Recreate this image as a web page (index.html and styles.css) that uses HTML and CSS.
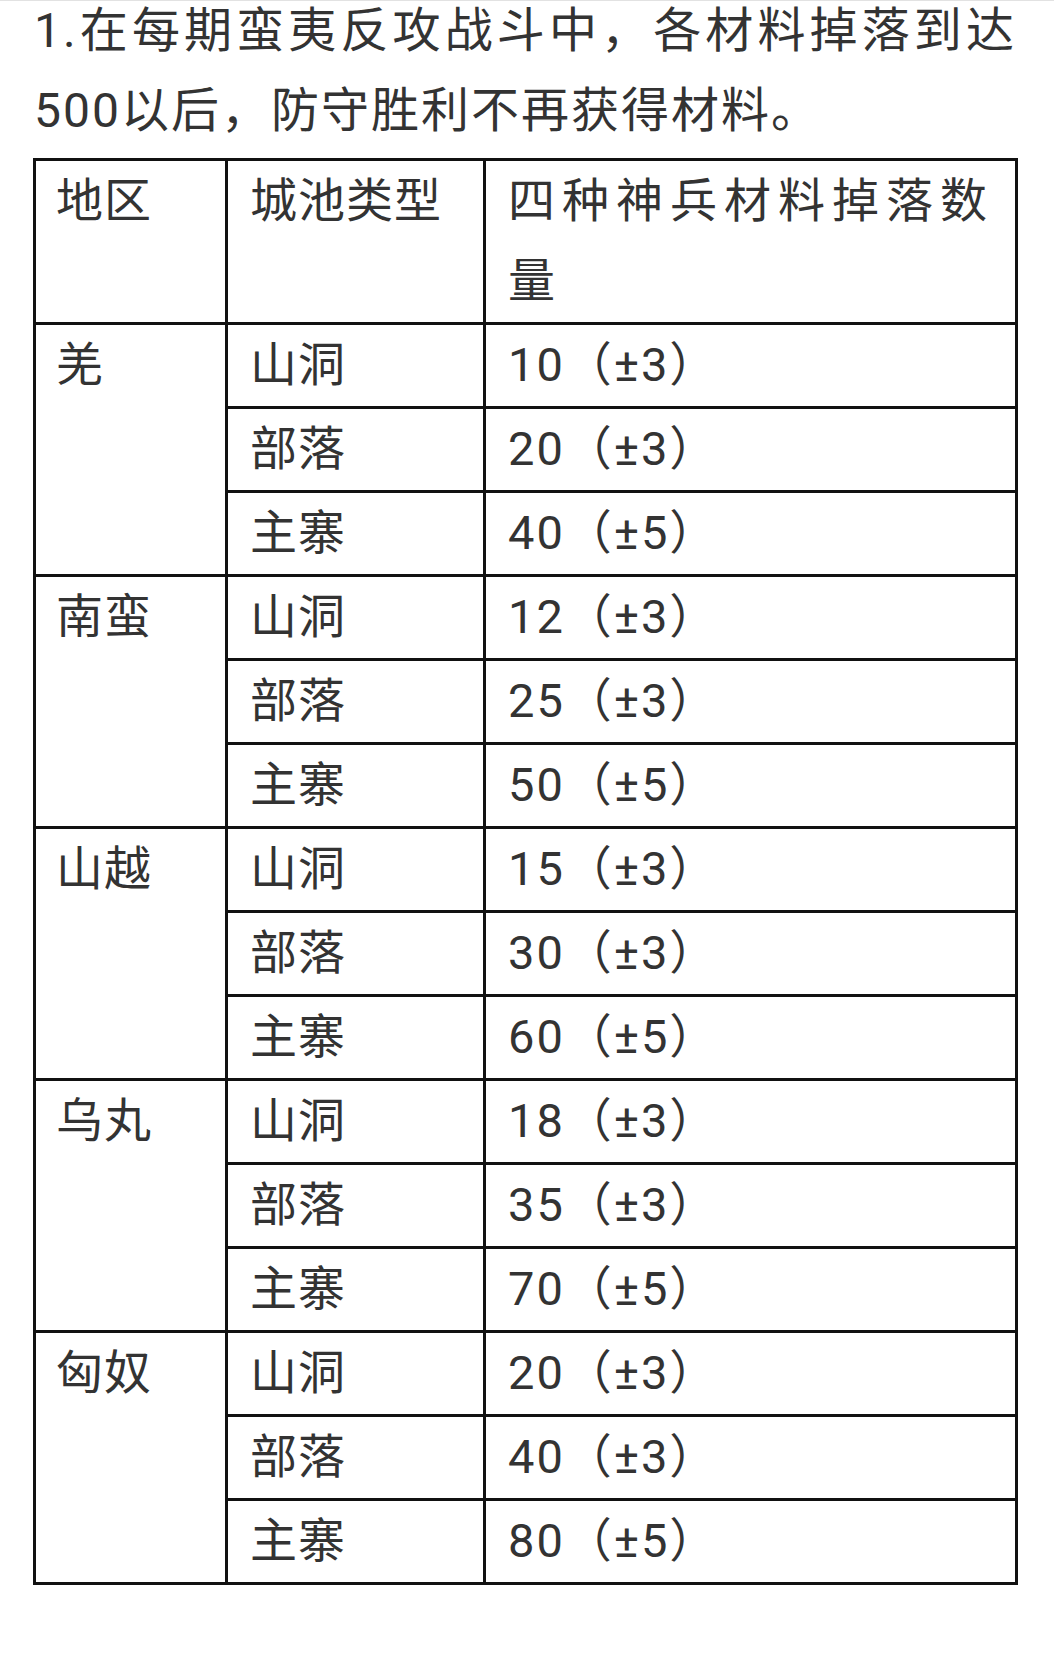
FILE: index.html
```html
<!DOCTYPE html>
<html lang="zh-CN">
<head>
<meta charset="utf-8">
<link rel="stylesheet" href="styles.css">
</head>
<body>
<div class="page">
  <p class="intro">1.在每期蛮夷反攻战斗中，各材料掉落到达500以后，防守胜利不再获得材料。</p>
  <table class="drops">
    <colgroup>
      <col class="c1">
      <col class="c2">
      <col class="c3">
    </colgroup>
    <tr><td class="region">地区</td><td>城池类型</td><td class="wide">四种神兵材料掉落数量</td></tr>
    <tr><td class="region" rowspan="3">羌</td><td>山洞</td><td class="wide">10（±3）</td></tr>
    <tr><td>部落</td><td class="wide">20（±3）</td></tr>
    <tr><td>主寨</td><td class="wide">40（±5）</td></tr>
    <tr><td class="region" rowspan="3">南蛮</td><td>山洞</td><td class="wide">12（±3）</td></tr>
    <tr><td>部落</td><td class="wide">25（±3）</td></tr>
    <tr><td>主寨</td><td class="wide">50（±5）</td></tr>
    <tr><td class="region" rowspan="3">山越</td><td>山洞</td><td class="wide">15（±3）</td></tr>
    <tr><td>部落</td><td class="wide">30（±3）</td></tr>
    <tr><td>主寨</td><td class="wide">60（±5）</td></tr>
    <tr><td class="region" rowspan="3">乌丸</td><td>山洞</td><td class="wide">18（±3）</td></tr>
    <tr><td>部落</td><td class="wide">35（±3）</td></tr>
    <tr><td>主寨</td><td class="wide">70（±5）</td></tr>
    <tr><td class="region" rowspan="3">匈奴</td><td>山洞</td><td class="wide">20（±3）</td></tr>
    <tr><td>部落</td><td class="wide">40（±3）</td></tr>
    <tr><td>主寨</td><td class="wide">80（±5）</td></tr>
  </table>
</div>
</body>
</html>
```
FILE: styles.css
```css
html, body {
  margin: 0;
  padding: 0;
  background: #ffffff;
}
body {
  border-top: 1px solid #e2e2e2;
  font-family: Roboto, "Noto Sans CJK SC", sans-serif;
  color: #333333;
}
.page {
  padding: 0 38px 0 34px;
}
.intro {
  margin: -10px 0 7px;
  font-size: 48px;
  line-height: 80px;
  letter-spacing: 2px;
  text-align: justify;
}
.drops {
  width: 982px;
  table-layout: fixed;
  border-collapse: collapse;
  border: 3px solid #111111;
  margin-left: -1px;
}
.c1 { width: 192px; }
.c2 { width: 258px; }
.c3 { width: 532px; }
.drops td {
  border: 3px solid #111111;
  vertical-align: top;
  font-size: 47px;
  line-height: 80px;
  letter-spacing: 1px;
  padding: 0 20px 1px 22px;
  text-align: justify;
}
.drops td.region {
  padding-left: 20px;
}
.drops td.wide {
  padding-right: 26px;
  letter-spacing: 2px;
}
```
